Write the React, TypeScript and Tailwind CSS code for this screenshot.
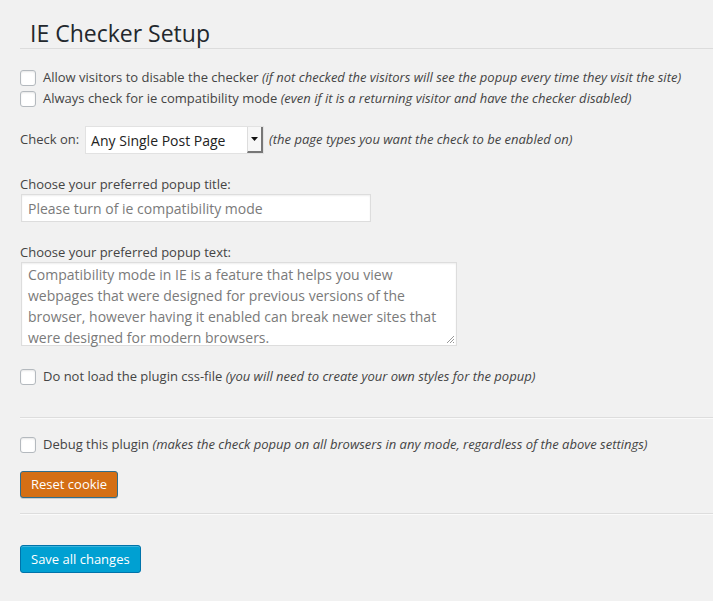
import React from "react";

function Box() {
  return (
    <span className="inline-block w-[16px] h-[16px] shrink-0 rounded-[3px] border border-[#b4b9be] bg-white shadow-[inset_0_1px_2px_rgba(0,0,0,0.1)]" />
  );
}

function CheckRow({ label, note, cls }: { label: string; note: string; cls?: string }) {
  return (
    <div className={"flex items-center h-[21px] " + (cls || "")}>
      <span className="ml-[20px] mr-[7px] flex"><Box /></span>
      <span className="text-[13px] text-[#444] whitespace-nowrap">
        {label} <i>{note}</i>
      </span>
    </div>
  );
}

export default function App() {
  return (
    <div className="min-h-[601px] w-[713px] bg-[#f1f1f1] overflow-hidden" style={{ fontFamily: '"Open Sans", sans-serif' }}>
      <div className="pt-[19px] ml-[20px] border-b border-[#dcdcdc]">
        <h2 className="pl-[10px] text-[23px] leading-[29px] text-[#23282d] font-normal">IE Checker Setup</h2>
      </div>
      <div className="h-[18px]" />
      <CheckRow label="Allow visitors to disable the checker" note="(if not checked the visitors will see the popup every time they visit the site)" />
      <CheckRow label="Always check for ie compatibility mode" note="(even if it is a returning visitor and have the checker disabled)" />
      <div className="h-[17px]" />
      <div className="flex items-center ml-[20px] h-[28px] text-[13px] text-[#444]">
        <span className="mr-[6px]">Check on:</span>
        <div className="flex items-stretch w-[179px] h-[28px] bg-white border border-[#e2e2e2]">
          <span className="flex-1 flex items-center pl-[5px] text-[14px] text-[#222]">Any Single Post Page</span>
          <span className="w-[16px] flex items-center justify-center border-l border-[#ddd] border-r-2 border-b-2 border-r-[#777] border-b-[#777] bg-[#f7f7f7]">
            <svg width="7" height="4" viewBox="0 0 7 4"><path d="M0 0h7L3.5 4z" fill="#111" /></svg>
          </span>
        </div>
        <i className="ml-[5px]">(the page types you want the check to be enabled on)</i>
      </div>
      <div className="h-[20px]" />
      <div className="ml-[20px] text-[13px] text-[#444] h-[20px] leading-[20px]">Choose your preferred popup title:</div>
      <div className="ml-[21px] w-[350px] h-[28px] bg-white border border-[#ddd] shadow-[inset_0_1px_2px_rgba(0,0,0,0.07)] flex items-center pl-[6px] text-[14px] text-[#7a7a7a]">
        Please turn of ie compatibility mode
      </div>
      <div className="h-[20px]" />
      <div className="ml-[20px] text-[13px] text-[#444] h-[20px] leading-[20px]">Choose your preferred popup text:</div>
      <div className="relative ml-[21px] w-[436px] h-[84px] bg-white border border-[#ddd] shadow-[inset_0_1px_2px_rgba(0,0,0,0.07)] pl-[6px] pt-[1px] text-[14px] leading-[21px] text-[#7a7a7a]">
        Compatibility mode in IE is a feature that helps you view webpages that were designed for previous versions of the browser, however having it enabled can break newer sites that were designed for modern browsers.
        <svg className="absolute right-[1px] bottom-[1px]" width="10" height="10" viewBox="0 0 10 10">
          <path d="M9 2L2 9M9 5L5 9M9 8L8 9" stroke="#999" strokeWidth="1" />
        </svg>
      </div>
      <div className="h-[20px]" />
      <CheckRow label="Do not load the plugin css-file" note="(you will need to create your own styles for the popup)" />
      <div className="h-[30px]" />
      <div className="ml-[20px] border-t border-[#ddd] border-b border-b-[#fafafa]" />
      <div className="h-[15px]" />
      <CheckRow label="Debug this plugin" note="(makes the check popup on all browsers in any mode, regardless of the above settings)" />
      <div className="h-[16px]" />
      <div className="ml-[20px]">
        <button className="h-[27px] px-[10px] rounded-[3px] bg-[#d46f15] border border-[#2f6d8c] text-white text-[13px] leading-[25px] shadow-[0_1px_0_#ccc]">Reset cookie</button>
      </div>
      <div className="h-[15px]" />
      <div className="ml-[20px] border-t border-[#ddd] border-b border-b-[#fafafa]" />
      <div className="h-[30px]" />
      <div className="ml-[20px]">
        <button className="h-[28px] px-[10px] rounded-[3px] bg-[#00a0d2] border border-[#0073aa] text-white text-[13px] leading-[26px] shadow-[inset_0_1px_0_rgba(120,200,230,0.5)]">Save all changes</button>
      </div>
    </div>
  );
}
